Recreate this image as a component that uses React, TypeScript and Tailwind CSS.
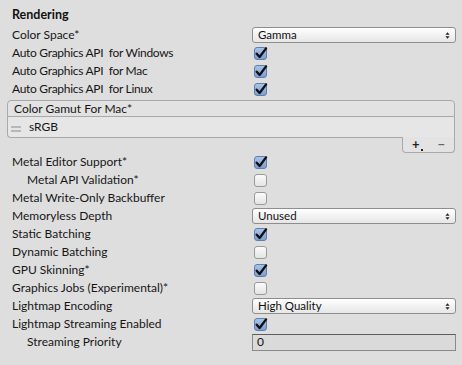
import type { ReactNode } from 'react'

const font = { fontFamily: 'Lato, "Open Sans", sans-serif' }

function Check({ on }: { on: boolean }) {
  if (!on) {
    return (
      <div className="w-[13px] h-[13px] rounded-[3px] border border-[#9a9a9a] bg-gradient-to-b from-[#fbfbfb] to-[#e4e4e4]" />
    )
  }
  return (
    <div className="relative w-[13px] h-[13px] rounded-[3px] border border-[#5d7fb0] bg-gradient-to-b from-[#a9c3e8] to-[#7d9ed3]">
      <svg viewBox="0 0 13 13" className="absolute -left-px -top-[2px] w-[14px] h-[14px]">
        <path d="M2.5 7.2 L5.2 10.2 L11.2 2.2" fill="none" stroke="#111" strokeWidth="2.2" strokeLinecap="round" strokeLinejoin="round" />
      </svg>
    </div>
  )
}

function Dropdown({ value }: { value: string }) {
  return (
    <div className="flex items-center justify-between w-[204px] h-[16px] rounded-[3px] border border-[#8e8e8e] bg-gradient-to-b from-[#ffffff] to-[#e6e6e6] pl-[5px] pr-[5px]">
      <span className="text-[11.5px] leading-none text-[#111]">{value}</span>
      <svg viewBox="0 0 6 10" className="w-[5px] h-[9px]">
        <path d="M0.5 4 L3 1 L5.5 4 Z M0.5 6 L3 9 L5.5 6 Z" fill="#222" />
      </svg>
    </div>
  )
}

function Row({ label, indent, tight, children }: { label: string; indent?: boolean; tight?: boolean; children?: ReactNode }) {
  return (
    <div className="flex items-center h-[18px]">
      <div
        className={`w-[252px] text-[12px] text-[#161616] whitespace-pre ${indent ? 'pl-[27px]' : 'pl-[12px]'} ${tight ? 'tracking-[-0.3px]' : ''}`}
      >
        {label}
      </div>
      <div className="flex items-center">{children}</div>
    </div>
  )
}

export default function App() {
  return (
    <div className="w-[462px] h-[365px] bg-[#dedede] overflow-hidden pt-[6px]" style={font}>
      <div className="h-[18px] flex items-center pl-[12px] text-[12.5px] font-bold text-[#111]">Rendering</div>
      <div className="h-[2px]" />
      <Row label="Color Space*">
        <Dropdown value="Gamma" />
      </Row>
      <Row label="Auto Graphics API  for Windows" tight>
        <div className="pl-[2px]"><Check on /></div>
      </Row>
      <Row label="Auto Graphics API  for Mac" tight>
        <div className="pl-[2px]"><Check on /></div>
      </Row>
      <Row label="Auto Graphics API  for Linux" tight>
        <div className="pl-[2px]"><Check on /></div>
      </Row>

      <div className="mt-[2px] mx-[7px] flex flex-col">
        <div className="h-[17px] flex items-center pl-[6px] rounded-t-[4px] border border-[#a9a9a9] bg-[#e2e2e2] text-[12px] text-[#161616]">
          Color Gamut For Mac*
        </div>
        <div className="h-[21px] flex items-center gap-[8px] pl-[3px] border-x border-b border-[#a9a9a9] rounded-bl-[4px] bg-[#e6e6e6] text-[12px] text-[#161616]">
          <svg viewBox="0 0 10 6" className="w-[10px] h-[6px] mt-[3px]">
            <path d="M0 1 H10 M0 5 H10" stroke="#8a8a8a" strokeWidth="1" />
          </svg>
          <span>sRGB</span>
        </div>
        <div className="flex justify-end">
          <div className="w-[53px] h-[16px] -mt-px flex items-center justify-around border-x border-b border-[#a9a9a9] rounded-b-[4px] bg-[#e3e3e3]">
            <span className="relative text-[13px] font-bold leading-none text-[#222]">
              +<span className="absolute right-[-3px] bottom-[0px] w-[2px] h-[2px] bg-[#222]" />
            </span>
            <span className="text-[13px] font-bold leading-none text-[#666]">−</span>
          </div>
        </div>
      </div>

      <Row label="Metal Editor Support*">
        <div className="pl-[2px]"><Check on /></div>
      </Row>
      <Row label="Metal API Validation*" indent>
        <div className="pl-[2px]"><Check on={false} /></div>
      </Row>
      <Row label="Metal Write-Only Backbuffer">
        <div className="pl-[2px]"><Check on={false} /></div>
      </Row>
      <Row label="Memoryless Depth">
        <Dropdown value="Unused" />
      </Row>
      <Row label="Static Batching">
        <div className="pl-[2px]"><Check on /></div>
      </Row>
      <Row label="Dynamic Batching">
        <div className="pl-[2px]"><Check on={false} /></div>
      </Row>
      <Row label="GPU Skinning*">
        <div className="pl-[2px]"><Check on /></div>
      </Row>
      <Row label="Graphics Jobs (Experimental)*">
        <div className="pl-[2px]"><Check on={false} /></div>
      </Row>
      <Row label="Lightmap Encoding">
        <Dropdown value="High Quality" />
      </Row>
      <Row label="Lightmap Streaming Enabled">
        <div className="pl-[2px]"><Check on /></div>
      </Row>
      <Row label="Streaming Priority" indent>
        <div className="w-[204px] h-[17px] flex items-center pl-[4px] border border-[#8a8a8a] border-t-[#5e5e5e] bg-[#dadada] text-[12px] text-[#111]">
          0
        </div>
      </Row>
    </div>
  )
}
